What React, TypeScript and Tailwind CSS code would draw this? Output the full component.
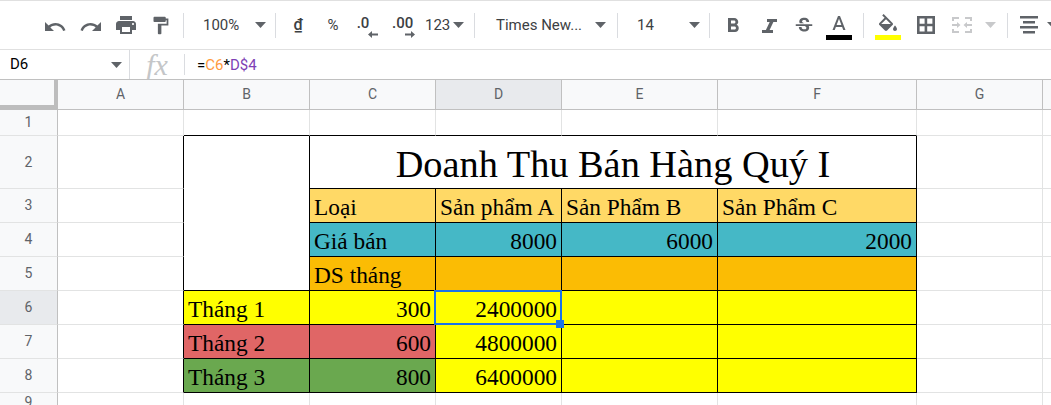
import React from "react";

const Ic = ({ d, size = 24, color = "#5f6368", className = "" }: { d: string; size?: number; color?: string; className?: string }) => (
  <svg width={size} height={size} viewBox="0 0 24 24" fill={color} className={className}>
    <path d={d} />
  </svg>
);

const Caret = ({ color = "#5f6368" }: { color?: string }) => (
  <svg width="11" height="6" viewBox="0 0 11 6" fill={color} className="shrink-0">
    <path d="M0 0h11L5.5 6z" />
  </svg>
);

const Sep = () => <div className="w-px h-[25px] bg-[#dadce0] shrink-0" />;

const paths = {
  undo: "M12.5 8c-2.65 0-5.05.99-6.9 2.6L2 7v9h9l-3.62-3.62c1.39-1.16 3.16-1.88 5.12-1.88 3.54 0 6.55 2.31 7.6 5.5l2.37-.78C21.08 11.03 17.15 8 12.5 8z",
  redo: "M18.4 10.6C16.55 8.99 14.15 8 11.5 8c-4.65 0-8.58 3.03-9.96 7.22L3.9 16c1.05-3.19 4.05-5.5 7.6-5.5 1.95 0 3.73.72 5.12 1.88L13 16h9V7l-3.6 3.6z",
  print: "M19 8H5c-1.66 0-3 1.34-3 3v6h4v4h12v-4h4v-6c0-1.66-1.34-3-3-3zm-3 11H8v-5h8v5zm3-7c-.55 0-1-.45-1-1s.45-1 1-1 1 .45 1 1-.45 1-1 1zm-1-9H6v4h12V3z",
  paint: "M18 4V3c0-.55-.45-1-1-1H5c-.55 0-1 .45-1 1v4c0 .55.45 1 1 1h12c.55 0 1-.45 1-1V6h1v4H9v11c0 .55.45 1 1 1h2c.55 0 1-.45 1-1v-9h8V4h-3z",
  bold: "M15.6 10.79c.97-.67 1.65-1.77 1.65-2.79 0-2.26-1.75-4-4-4H7v14h7.04c2.09 0 3.71-1.7 3.71-3.79 0-1.52-.86-2.82-2.15-3.42zM10 6.5h3c.83 0 1.5.67 1.5 1.5s-.67 1.5-1.5 1.5h-3v-3zm3.5 9H10v-3h3.5c.83 0 1.5.67 1.5 1.5s-.67 1.5-1.5 1.5z",
  italic: "M10 4h10v3h-3.6l-3.8 8H16v3H5v-3h3.9l3.8-8H10z",
  strike: "M7.24 8.75c-.26-.48-.39-1.03-.39-1.67 0-.61.13-1.16.4-1.67.26-.5.63-.93 1.11-1.29.48-.35 1.05-.63 1.7-.83.66-.19 1.39-.29 2.18-.29.81 0 1.54.11 2.21.34.66.22 1.23.54 1.69.94.47.4.83.88 1.08 1.43.25.55.38 1.15.38 1.81h-3.01c0-.31-.05-.59-.15-.85-.09-.27-.24-.49-.44-.68-.2-.19-.45-.33-.75-.44-.3-.1-.66-.16-1.06-.16-.39 0-.74.04-1.03.13-.29.09-.53.21-.72.36-.19.16-.34.34-.44.55-.1.21-.15.43-.15.66 0 .48.25.88.74 1.21.38.25.77.48 1.41.7H7.39c-.05-.08-.11-.17-.15-.25zM21 12v-2H3v2h9.62c.18.07.4.14.55.2.37.17.66.34.87.51.21.17.35.36.43.57.07.2.11.43.11.69 0 .23-.05.45-.14.66-.09.2-.23.38-.42.53-.19.15-.42.26-.71.35-.29.08-.63.13-1.01.13-.43 0-.83-.04-1.18-.13s-.66-.23-.91-.42c-.25-.19-.45-.44-.59-.75-.14-.31-.25-.76-.25-1.21H6.4c0 .55.08 1.13.24 1.58.16.45.37.85.65 1.21.28.35.6.66.98.92.37.26.78.48 1.22.65.44.17.9.3 1.38.39.48.08.96.13 1.44.13.8 0 1.53-.09 2.18-.28s1.21-.45 1.67-.79c.46-.34.82-.77 1.07-1.27s.38-1.07.38-1.71c0-.6-.1-1.14-.31-1.61-.05-.11-.11-.23-.17-.33H21V12z",
  textA: "M11 1L5.5 15h2.25l1.12-3h6.25l1.12 3h2.25L13 1h-2zM9.62 10L12 3.67 14.38 10H9.62z",
  fill: "M16.56 8.94L7.62 0 6.21 1.41l2.38 2.38-5.15 5.15c-.59.59-.59 1.54 0 2.12l5.5 5.5c.29.29.68.44 1.06.44s.77-.15 1.06-.44l5.5-5.5c.59-.58.59-1.53 0-2.12zM5.21 10L10 5.21 14.79 10H5.21zM19 11.5s-2 2.17-2 3.5c0 1.1.9 2 2 2s2-.9 2-2c0-1.33-2-3.5-2-3.5z",
  border: "M3 3v18h18V3H3zm7.6 15.4H5.6v-5.1h5v5.1zm0-7.7H5.6V5.6h5v5.1zm7.8 7.7h-5.2v-5.1h5.2v5.1zm0-7.7h-5.2V5.6h5.2v5.1z",
  merge: "M2 4h7v2H4v2H2zM22 4h-7v2h5v2h2zM2 20h7v-2H4v-2H2zM22 20h-7v-2h5v-2h2zM2 11h5V9l3.5 3L7 15v-2H2zM22 11h-5V9l-3.5 3 3.5 3v-2h5z",
  align: "M3 3h18v2.5H3zM6 8h12v2.5H6zM3 13h18v2.5H3zM6 18h12v2.5H6z",
};

const cols = ["A", "B", "C", "D", "E", "F", "G", ""];

const lineR = "border-r border-r-[#e2e3e3]";
const lineB = "border-b border-b-[#e2e3e3]";
const blackR = "border-r border-r-black";
const blackB = "border-b border-b-black";

const Cell = ({ className = "", right = false, children }: { className?: string; right?: boolean; children?: React.ReactNode }) => (
  <div className={`flex items-end overflow-hidden px-1 pb-[2px] text-[23.33px] leading-[26px] text-black whitespace-nowrap ${right ? "justify-end" : "justify-start"} ${className}`}>
    {children}
  </div>
);

const RowHead = ({ n, active = false }: { n: number; active?: boolean }) => (
  <div className={`flex items-center justify-center border-r border-r-[#c0c0c0] border-b border-b-[#e2e3e3] font-['Roboto',sans-serif] text-[14px] text-[#5f6368] ${active ? "bg-[#e8eaed]" : "bg-[#f8f9fa]"}`}>
    {n}
  </div>
);

const Y = "bg-[#ffff00]";
const H = "bg-[#ffd966]";
const T = "bg-[#45b8c6]";
const O = "bg-[#fbbc04]";
const R = "bg-[#e06666]";
const G = "bg-[#6aa84f]";
const bb = `${blackR} ${blackB}`;

export default function App() {
  return (
    <div className="w-[1051px] h-[405px] overflow-hidden bg-white flex flex-col font-['Roboto',sans-serif]">
      {/* toolbar */}
      <div className="h-[50px] shrink-0 overflow-hidden border-t border-t-[#e0e0e0] border-b border-b-[#e0e0e0] flex items-center pl-[37px] text-[15px] text-[#3c4043] *:shrink-0">
        <div className="w-[36px] flex justify-center pt-[4px]"><Ic d={paths.undo} /></div>
        <div className="w-[35px] flex justify-center pt-[4px]"><Ic d={paths.redo} /></div>
        <div className="w-[35px] flex justify-center"><Ic d={paths.print} /></div>
        <div className="w-[35px] flex justify-center"><Ic d={paths.paint} size={21} /></div>
        <div className="w-[5px]" />
        <Sep />
        <div className="w-[91px] flex items-center pl-[19px]">
          <span className="w-[52px]">100%</span>
          <Caret />
        </div>
        <Sep />
        <div className="w-[44px] flex justify-center text-[16px] font-medium underline">₫</div>
        <div className="w-[26px] flex justify-center">%</div>
        <div className="w-[34px] flex flex-col items-center pt-[4px]">
          <span className="leading-[15px] font-medium">.0</span>
          <svg width="10" height="7" viewBox="0 0 10 7" fill="#5f6368" className="ml-[20px]"><path d="M0 3.5L4 0v2.5h6v2H4V7z" /></svg>
        </div>
        <div className="w-[45px] flex flex-col items-start pl-[12px] pt-[4px]">
          <span className="leading-[15px] font-medium">.00</span>
          <svg width="10" height="7" viewBox="0 0 10 7" fill="#5f6368" className="ml-[13px]"><path d="M10 3.5L6 0v2.5H0v2h6V7z" /></svg>
        </div>
        <div className="w-[49px] flex items-center gap-[3px]">
          <span>123</span>
          <Caret />
        </div>
        <Sep />
        <div className="w-[142px] flex items-center pl-[21px]">
          <span className="w-[99px] whitespace-nowrap">Times New...</span>
          <Caret />
        </div>
        <Sep />
        <div className="w-[91px] flex items-center pl-[19px]">
          <span className="w-[52px]">14</span>
          <Caret />
        </div>
        <Sep />
        <div className="w-[45px] flex justify-center pt-[2px]"><Ic d={paths.bold} /></div>
        <div className="w-[27px] flex justify-center pt-[3px]"><Ic d={paths.italic} /></div>
        <div className="w-[43px] flex justify-center pt-[2px]"><Ic d={paths.strike} size={22} /></div>
        <div className="w-[28px] self-start mt-[14px] flex flex-col items-center">
          <Ic d={paths.textA} />
          <div className="w-[26px] h-[5px] bg-black -mt-[4px]" />
        </div>
        <div className="w-[10px]" />
        <Sep />
        <div className="w-[48px] self-start mt-[13px] flex flex-col items-center">
          <Ic d={paths.fill} />
          <div className="w-[26px] h-[5px] bg-[#ffff00] -mt-[3px]" />
        </div>
        <div className="w-[27px] flex justify-center"><Ic d={paths.border} /></div>
        <div className="w-[46px] flex justify-center"><Ic d={paths.merge} color="#c8c9cb" /></div>
        <div className="w-[22px] flex"><Caret color="#c8c9cb" /></div>
        <Sep />
        <div className="w-[39px] flex justify-center pl-[3px]"><Ic d={paths.align} /></div>
        <Caret />
      </div>

      {/* formula bar */}
      <div className="h-[29px] shrink-0 flex items-center">
        <div className="w-[129px] flex items-center pl-[10px] text-[15px] text-black">
          <span className="w-[101px]">D6</span>
          <Caret />
        </div>
        <div className="w-px h-full bg-[#dadce0]" />
        <div className="w-[54px] flex justify-center font-['Liberation_Serif',serif] italic text-[30px] leading-[28px] text-[#c4c6c8]">fx</div>
        <div className="w-px h-[21px] bg-[#dadce0]" />
        <div className="pl-[12px] pt-[1px] text-[15px] text-black">
          =<span className="text-[#ff9a3d]">C6</span>*<span className="text-[#7e3fb5]">D$4</span>
        </div>
      </div>

      {/* sheet */}
      <div className="relative flex-1 overflow-hidden border-t border-t-[#c0c0c0] font-['Liberation_Serif',serif] grid grid-cols-[58px_126px_126px_126px_126px_156px_199px_126px_20px] grid-rows-[30px_26px_53px_34px_34px_34px_34px_34px_34px_20px]">
        {/* headers */}
        <div className="bg-[#f8f9fa] border-r-[4px] border-r-[#bdbdbd] border-b-[5px] border-b-[#bdbdbd]" />
        {cols.map((c) => (
          <div
            key={c || "H"}
            className={`flex items-center justify-center border-r border-r-[#c0c0c0] border-b border-b-[#c0c0c0] font-['Roboto',sans-serif] text-[14px] text-[#5f6368] ${c === "D" ? "bg-[#e8eaed]" : "bg-[#f8f9fa]"}`}
          >
            {c}
          </div>
        ))}

        {/* row 1 */}
        <RowHead n={1} />
        <div className={`${lineR} ${lineB}`} />
        <div className={`${lineR} ${blackB}`} />
        <div className={`${lineR} ${blackB}`} />
        <div className={`${lineR} ${blackB}`} />
        <div className={`${lineR} ${blackB}`} />
        <div className={`${lineR} ${blackB}`} />
        <div className={`${lineR} ${lineB}`} />
        <div className={lineB} />

        {/* row 2 */}
        <RowHead n={2} />
        <div className={`${blackR} ${lineB}`} />
        <div className={`row-span-4 ${bb}`} />
        <div className={`col-span-4 flex items-end justify-center overflow-hidden whitespace-nowrap pb-[2px] text-[38.33px] leading-[44px] text-black ${bb}`}>
          Doanh Thu Bán Hàng Quý I
        </div>
        <div className={`${lineR} ${lineB}`} />
        <div className={lineB} />

        {/* row 3 */}
        <RowHead n={3} />
        <div className={`${blackR} ${lineB}`} />
        <Cell className={`${H} ${bb}`}>Loại</Cell>
        <Cell className={`${H} ${bb}`}>Sản phẩm A</Cell>
        <Cell className={`${H} ${bb}`}>Sản Phẩm B</Cell>
        <Cell className={`${H} ${bb}`}>Sản Phẩm C</Cell>
        <div className={`${lineR} ${lineB}`} />
        <div className={lineB} />

        {/* row 4 */}
        <RowHead n={4} />
        <div className={`${blackR} ${lineB}`} />
        <Cell className={`${T} ${bb}`}>Giá bán</Cell>
        <Cell right className={`${T} ${bb}`}>8000</Cell>
        <Cell right className={`${T} ${bb}`}>6000</Cell>
        <Cell right className={`${T} ${bb}`}>2000</Cell>
        <div className={`${lineR} ${lineB}`} />
        <div className={lineB} />

        {/* row 5 */}
        <RowHead n={5} />
        <div className={`${blackR} ${lineB}`} />
        <Cell className={`${O} ${bb}`}>DS tháng</Cell>
        <Cell className={`${O} ${bb}`} />
        <Cell className={`${O} ${bb}`} />
        <Cell className={`${O} ${bb}`} />
        <div className={`${lineR} ${lineB}`} />
        <div className={lineB} />

        {/* row 6 */}
        <RowHead n={6} active />
        <div className={`${blackR} ${lineB}`} />
        <Cell className={`${Y} ${bb}`}>Tháng 1</Cell>
        <Cell right className={`${Y} ${bb}`}>300</Cell>
        <Cell right className={`relative overflow-visible ${Y} ${bb}`}>
          2400000
          <div className="absolute -left-[2px] -top-px -right-px -bottom-px border-2 border-[#1a73e8]" />
          <div className="absolute -right-[3px] -bottom-[4px] w-[8px] h-[8px] bg-[#1a73e8] z-10" />
        </Cell>
        <Cell className={`${Y} ${bb}`} />
        <Cell className={`${Y} ${bb}`} />
        <div className={`${lineR} ${lineB}`} />
        <div className={lineB} />

        {/* row 7 */}
        <RowHead n={7} />
        <div className={`${blackR} ${lineB}`} />
        <Cell className={`${R} ${bb}`}>Tháng 2</Cell>
        <Cell right className={`${R} ${bb}`}>600</Cell>
        <Cell right className={`${Y} ${bb}`}>4800000</Cell>
        <Cell className={`${Y} ${bb}`} />
        <Cell className={`${Y} ${bb}`} />
        <div className={`${lineR} ${lineB}`} />
        <div className={lineB} />

        {/* row 8 */}
        <RowHead n={8} />
        <div className={`${blackR} ${lineB}`} />
        <Cell className={`${G} ${bb}`}>Tháng 3</Cell>
        <Cell right className={`${G} ${bb}`}>800</Cell>
        <Cell right className={`${Y} ${bb}`}>6400000</Cell>
        <Cell className={`${Y} ${bb}`} />
        <Cell className={`${Y} ${bb}`} />
        <div className={`${lineR} ${lineB}`} />
        <div className={lineB} />

        {/* row 9 */}
        <RowHead n={9} />
        <div className={lineR} />
        <div className={lineR} />
        <div className={lineR} />
        <div className={lineR} />
        <div className={lineR} />
        <div className={lineR} />
        <div className={lineR} />
        <div />
      </div>
    </div>
  );
}
